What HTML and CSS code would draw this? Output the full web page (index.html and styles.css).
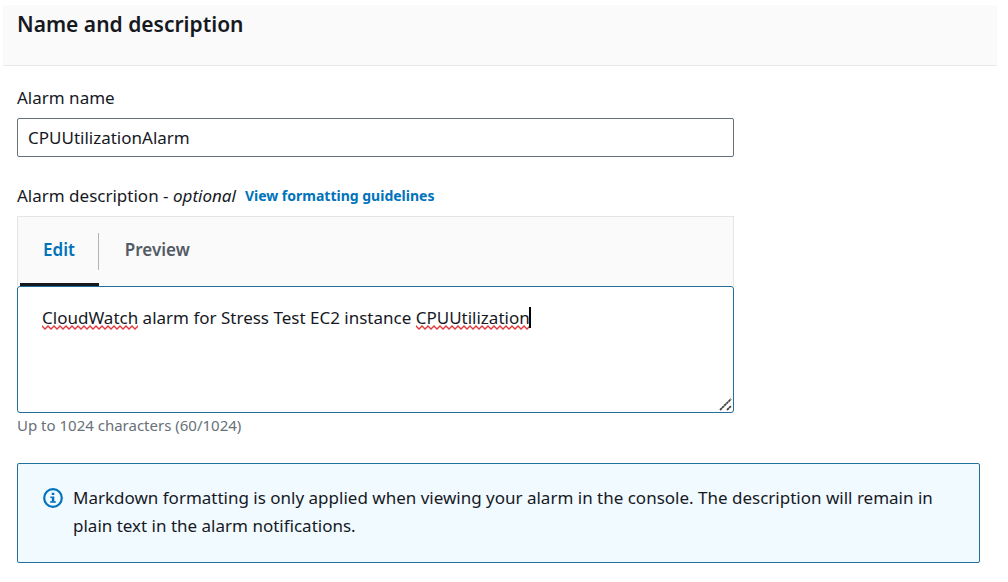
FILE: index.html
```html
<!DOCTYPE html>
<html lang="en">
<head>
<meta charset="utf-8">
<meta name="viewport" content="width=device-width, initial-scale=1">
<title>Name and description</title>
<link rel="stylesheet" href="styles.css">
</head>
<body>
<main class="panel">
  <header class="panel-header">
    <h2 class="panel-title">Name and description</h2>
  </header>
  <form class="panel-body">
    <div class="field name-field">
      <label class="label" for="alarm-name">Alarm name</label>
      <input class="input" id="alarm-name" type="text" value="CPUUtilizationAlarm" spellcheck="false">
    </div>
    <div class="field description-field">
      <div class="label-row">
        <label class="label" for="alarm-description">Alarm description - <em>optional</em></label>
        <a class="link" href="#guidelines">View formatting guidelines</a>
      </div>
      <div class="editor">
        <div class="tabs" role="tablist">
          <button class="tab tab-active" type="button" role="tab" aria-selected="true">Edit</button>
          <button class="tab" type="button" role="tab" aria-selected="false">Preview</button>
        </div>
        <div class="editor-area">
          <textarea class="textarea" id="alarm-description" spellcheck="false" aria-describedby="alarm-hint">CloudWatch alarm for Stress Test EC2 instance CPUUtilization</textarea>
          <svg class="squiggle squiggle-first" aria-hidden="true">
            <defs>
              <pattern id="wave" width="6" height="5" patternUnits="userSpaceOnUse">
                <path d="M-1 0 0 1l3 3 3-3 1-1" fill="none" stroke="#e0393e" stroke-width="1.4"/>
              </pattern>
            </defs>
            <rect width="100%" height="5" fill="url(#wave)"/>
          </svg>
          <svg class="squiggle squiggle-last" aria-hidden="true"><rect width="100%" height="5" fill="url(#wave)"/></svg>
          <span class="caret"></span>
          <svg class="grip" viewBox="0 0 13 13" aria-hidden="true"><path d="M1 12 12 1M8 12l4-4" fill="none" stroke="#444" stroke-width="1.8" stroke-dasharray="2.6 .4"/></svg>
        </div>
      </div>
      <p class="hint" id="alarm-hint">Up to 1024 characters (60/1024)</p>
    </div>
    <div class="alert" role="note">
      <svg class="alert-icon" viewBox="0 0 20 20" aria-hidden="true">
        <circle cx="10" cy="10" r="8.8" fill="none" stroke="#0073bb" stroke-width="2.2"/>
        <path d="M8.8 4.8h2.5v2.3H8.8zM7.3 8.4h4v4.9h1.6v1.5H7.1v-1.5h1.7V9.9H7.3z" fill="#0073bb"/>
      </svg>
      <p class="alert-text">Markdown formatting is only applied when viewing your alarm in the console. The description will remain in plain text in the alarm notifications.</p>
    </div>
  </form>
</main>
</body>
</html>
```
FILE: styles.css
```css
* {
  box-sizing: border-box;
}

body {
  margin: 0;
  padding: 5px 11px 20px 3px;
  background: #fff;
  color: #16191f;
  font: 17px/28px "Noto Sans", "Open Sans", sans-serif;
}

h2, p {
  margin: 0;
}

.panel-header {
  padding: 5px 14px 27px;
  background: #fafafa;
  border-bottom: 1px solid #e6e8e8;
}

.panel-title {
  font-size: 21px;
  font-weight: 600;
  line-height: 28px;
}

.panel-body {
  padding: 20px 17px 0 14px;
}

.field {
  max-width: 717px;
}

.name-field {
  margin-bottom: 27px;
}

.label {
  display: block;
  line-height: 24px;
}

.input {
  display: block;
  width: 100%;
  height: 39px;
  margin-top: 8px;
  padding: 0 10px;
  border: 1px solid #687078;
  border-radius: 2px;
  background: #fff;
  color: inherit;
  font: inherit;
}

.label-row {
  display: flex;
  align-items: center;
  gap: 9px;
  margin-bottom: 8px;
}

.link {
  color: #0073bb;
  font-size: 14px;
  font-weight: 700;
  line-height: 24px;
  text-decoration: none;
}

.tabs {
  display: flex;
  height: 70px;
  padding-left: 2px;
  background: #fafafa;
  border: 1px solid #e3e6e6;
  border-bottom: 0;
}

.tab {
  position: relative;
  padding: 0 26px 3px;
  border: 0;
  background: none;
  color: #545b64;
  font: inherit;
  font-weight: 600;
}

.tab-active {
  padding: 0 24px 0 23px;
  border-bottom: 3px solid #16191f;
  color: #0073bb;
}

.tab-active::after {
  content: "";
  position: absolute;
  top: 16px;
  right: 0;
  width: 1px;
  height: 37px;
  background: #aab7b8;
}

.editor-area {
  position: relative;
}

.textarea {
  display: block;
  width: 100%;
  height: 127px;
  padding: 17px 24px;
  border: 1px solid #1f6f99;
  border-radius: 3px;
  outline: 0;
  background: #fff;
  color: inherit;
  font: inherit;
  resize: vertical;
}

.textarea::-webkit-resizer {
  display: none;
}

.squiggle {
  position: absolute;
  top: 39px;
  height: 5px;
}

.squiggle-first {
  left: 25px;
  width: 96px;
}

.squiggle-last {
  left: 399px;
  width: 113px;
}

.caret {
  position: absolute;
  top: 21px;
  left: 512px;
  width: 2px;
  height: 21px;
  background: #000;
}

.grip {
  position: absolute;
  right: 2px;
  bottom: 2px;
  width: 13px;
  height: 13px;
  pointer-events: none;
}

.hint {
  color: #687078;
  font-size: 15px;
  line-height: 24px;
}

.alert {
  display: flex;
  align-items: flex-start;
  gap: 10px;
  margin-top: 26px;
  padding: 20px 25px 22px;
  border: 1px solid #1f7199;
  border-radius: 2px;
  background: #f1faff;
}

.alert-icon {
  flex: none;
  width: 20px;
  height: 20px;
  margin-top: 4px;
}
```
